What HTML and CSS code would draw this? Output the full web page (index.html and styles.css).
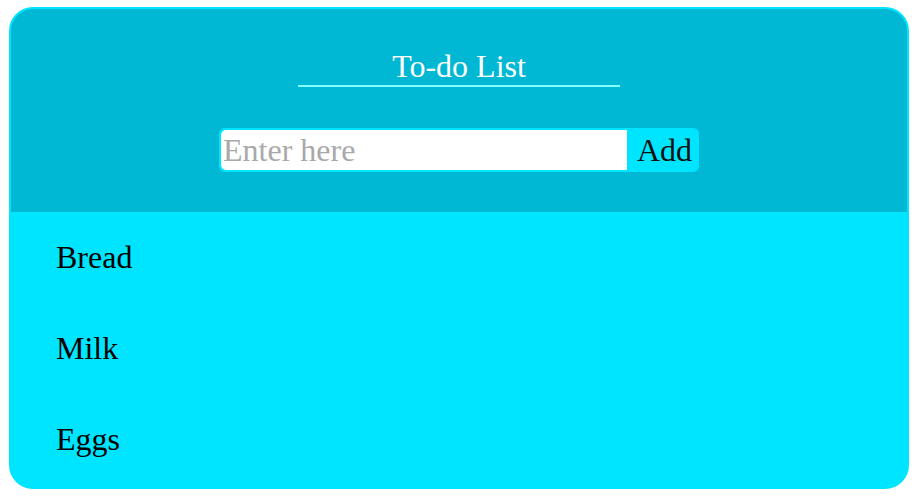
FILE: index.html
```html
<!DOCTYPE html>
<html>
<head>
<meta charset="utf-8">
<link rel="stylesheet" href="styles.css">
</head>
<body>
<div class="app">
  <div class="header">
    <h1 class="title">To-do List</h1>
    <form class="entry">
      <input class="entry-input" type="text" placeholder="Enter here">
      <button class="entry-btn" type="button">Add</button>
    </form>
  </div>
  <ul class="list">
    <li class="item">Bread</li>
    <li class="item">Milk</li>
    <li class="item">Eggs</li>
  </ul>
</div>
</body>
</html>
```
FILE: styles.css
```css
html, body {
  margin: 0;
  padding: 0;
  background: #ffffff;
}
body {
  font-family: "Liberation Serif", "Times New Roman", serif;
}
.app {
  width: 896px;
  height: 478px;
  margin: 7px 0 0 9px;
  border: 2px solid #00e5ff;
  border-radius: 24px;
  background: #00e5ff;
  overflow: hidden;
  display: flex;
  flex-direction: column;
}
.header {
  background: #00b8d4;
  height: 203px;
  box-sizing: border-box;
  padding-top: 39px;
  display: flex;
  flex-direction: column;
  align-items: center;
}
.title {
  margin: 0;
  width: 322px;
  text-align: center;
  font-size: 32px;
  font-weight: normal;
  line-height: 37px;
  color: #ffffff;
  border-bottom: 2px solid #84ffff;
}
.entry {
  margin: 41px 0 0 0;
  display: flex;
  border: 2px solid #00e5ff;
  border-radius: 6px;
  background: #00e5ff;
  overflow: hidden;
}
.entry-input {
  width: 406px;
  height: 40px;
  box-sizing: border-box;
  border: none;
  outline: none;
  padding: 0 0 0 2px;
  margin: 0;
  font-family: inherit;
  font-size: 32px;
  border-radius: 5px 0 0 5px;
  background: #ffffff;
  color: #000;
}
.entry-input::placeholder {
  color: #a9a9a9;
}
.entry-btn {
  width: 70px;
  height: 40px;
  border: none;
  margin: 0;
  padding: 0 0 0 10px;
  background: #00e5ff;
  font-family: inherit;
  font-size: 32px;
  color: #111;
  text-align: left;
}
.list {
  list-style: none;
  margin: 0;
  padding: 0;
}
.item {
  padding: 27px 45px;
  font-size: 32px;
  line-height: 37px;
  color: #000;
}
```
